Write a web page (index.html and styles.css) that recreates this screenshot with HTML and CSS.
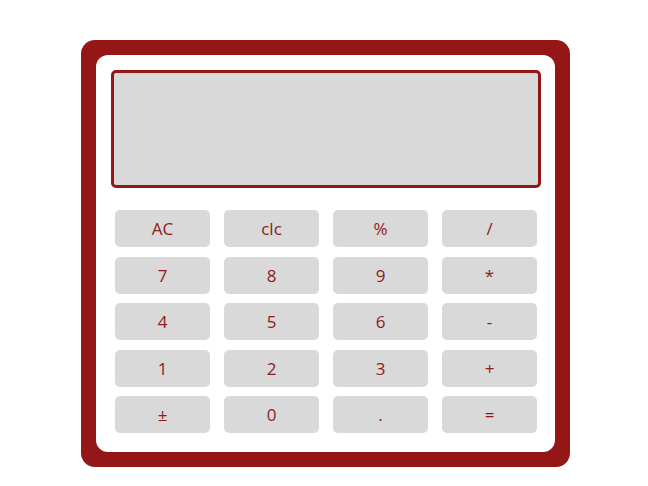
FILE: index.html
```html
<!DOCTYPE html>
<html>
<head>
<meta charset="utf-8">
<link rel="stylesheet" href="styles.css">
</head>
<body>
<div class="calc">
  <div class="inner">
    <div class="display"></div>
    <div class="keys">
      <button class="key">AC</button>
      <button class="key">clc</button>
      <button class="key">%</button>
      <button class="key">/</button>
      <button class="key">7</button>
      <button class="key">8</button>
      <button class="key">9</button>
      <button class="key">*</button>
      <button class="key">4</button>
      <button class="key">5</button>
      <button class="key">6</button>
      <button class="key">-</button>
      <button class="key">1</button>
      <button class="key">2</button>
      <button class="key">3</button>
      <button class="key">+</button>
      <button class="key">±</button>
      <button class="key">0</button>
      <button class="key">.</button>
      <button class="key">=</button>
    </div>
  </div>
</div>
</body>
</html>
```
FILE: styles.css
```css
html, body {
  margin: 0;
  padding: 0;
  background: #ffffff;
}
body {
  padding-top: 40px;
  padding-left: 81px;
  font-family: "Open Sans", "DejaVu Sans", sans-serif;
}
.calc {
  width: 459px;
  padding: 15px;
  background: #941616;
  border-radius: 14px;
}
.inner {
  background: #ffffff;
  border-radius: 12px;
  padding: 15px 14px 19px 15px;
}
.display {
  height: 112px;
  background: #d9d9d9;
  border: 3px solid #941616;
  border-radius: 5px;
}
.keys {
  margin-top: 22px;
  padding: 0 4px;
  display: grid;
  grid-template-columns: repeat(4, 95px);
  grid-auto-rows: 37px;
  column-gap: 14px;
  row-gap: 9.5px;
}
.key {
  border: none;
  background: #d9d9d9;
  border-radius: 5px;
  color: #8d1b1b;
  font-family: "Open Sans", "DejaVu Sans", sans-serif;
  font-size: 17px;
  padding: 0;
  margin: 0;
}
```
